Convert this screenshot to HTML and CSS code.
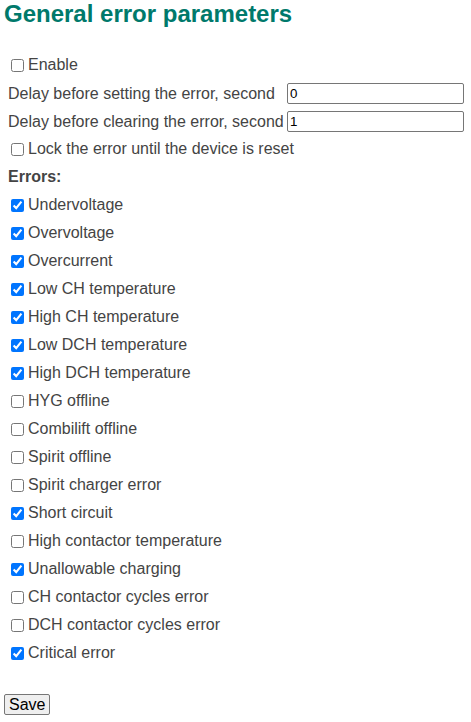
FILE: index.html
```html
<!DOCTYPE html>
<html lang="en">
<head>
    <meta charset="UTF-8">
    <title>General error parameters</title>
    <link rel="stylesheet" href="styles.css">
</head>
<body>
    <h2>General error parameters</h2>

    <form class="params">
        <div class="row"><label><input type="checkbox"> Enable</label></div>
        <div class="row field">
            <span class="field-label">Delay before setting the error, second</span>
            <input type="text" class="num" value="0">
        </div>
        <div class="row field short">
            <span class="field-label">Delay before clearing the error, second</span>
            <input type="text" class="num" value="1">
        </div>
        <div class="row"><label><input type="checkbox"> Lock the error until the device is reset</label></div>
        <div class="row title">Errors:</div>
        <div class="row"><label><input type="checkbox" checked> Undervoltage</label></div>
        <div class="row"><label><input type="checkbox" checked> Overvoltage</label></div>
        <div class="row"><label><input type="checkbox" checked> Overcurrent</label></div>
        <div class="row"><label><input type="checkbox" checked> Low CH temperature</label></div>
        <div class="row"><label><input type="checkbox" checked> High CH temperature</label></div>
        <div class="row"><label><input type="checkbox" checked> Low DCH temperature</label></div>
        <div class="row"><label><input type="checkbox" checked> High DCH temperature</label></div>
        <div class="row"><label><input type="checkbox"> HYG offline</label></div>
        <div class="row"><label><input type="checkbox"> Combilift offline</label></div>
        <div class="row"><label><input type="checkbox"> Spirit offline</label></div>
        <div class="row"><label><input type="checkbox"> Spirit charger error</label></div>
        <div class="row"><label><input type="checkbox" checked> Short circuit</label></div>
        <div class="row"><label><input type="checkbox"> High contactor temperature</label></div>
        <div class="row"><label><input type="checkbox" checked> Unallowable charging</label></div>
        <div class="row"><label><input type="checkbox"> CH contactor cycles error</label></div>
        <div class="row"><label><input type="checkbox"> DCH contactor cycles error</label></div>
        <div class="row"><label><input type="checkbox" checked> Critical error</label></div>

        <button type="button" class="save">Save</button>
    </form>
</body>
</html>
```

FILE: styles.css
```css
body {
    margin: 0;
    padding: 2px 4px;
    font-family: "Liberation Sans", Arial, sans-serif;
    font-size: 16px;
    color: #444;
}
h2 {
    margin: 0 0 25px 0;
    font-size: 24px;
    line-height: 1;
    color: #00796b;
}
.params {
    margin: 0;
}
.row {
    height: 28px;
    display: flex;
    align-items: center;
    padding-left: 3px;
}
.row label {
    display: flex;
    align-items: center;
}
.row input[type="checkbox"] {
    margin: 0 4px 0 4px;
    width: 13px;
    height: 13px;
}
.field {
    height: 29px;
}
.field.short {
    height: 27px;
}
.field-label {
    width: 279px;
    padding-left: 1px;
}
.num {
    box-sizing: border-box;
    width: 177px;
    height: 21px;
    margin: 0;
    padding: 1px 2px;
    border: 1px solid #767676;
    border-radius: 2px;
    font-family: "Liberation Sans", Arial, sans-serif;
    font-size: 13.33px;
    color: #000;
}
.title {
    font-weight: bold;
    padding-left: 4px;
}
.save {
    margin: 27px 0 0 0;
    height: 21px;
    padding: 0 4px;
    font-family: "Liberation Sans", Arial, sans-serif;
    font-size: 16px;
    line-height: 1;
    color: #000;
    background-color: #efefef;
    border: 1px solid #767676;
    border-radius: 2px;
}
```
